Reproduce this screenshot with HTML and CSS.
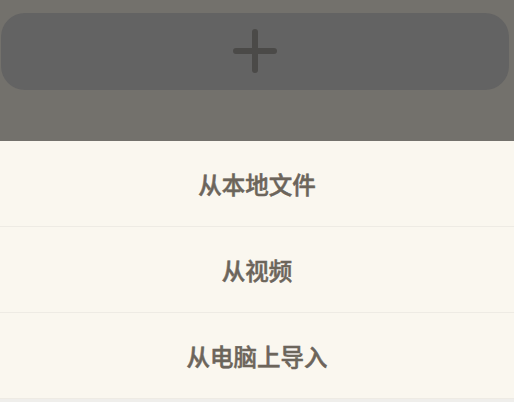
FILE: index.html
```html
<!DOCTYPE html>
<html lang="zh-CN">
<head>
<meta charset="utf-8">
<link rel="stylesheet" href="styles.css">
</head>
<body>
<div class="page">
  <div class="backdrop">
    <div class="add-card">
      <svg class="plus" width="44" height="44" viewBox="0 0 44 44" aria-hidden="true">
        <path d="M22 3 V41 M3 22 H41" stroke="#4b4a48" stroke-width="6" stroke-linecap="round" fill="none"/>
      </svg>
    </div>
  </div>
  <div class="sheet">
    <div class="option">从本地文件</div>
    <div class="option">从视频</div>
    <div class="option">从电脑上导入</div>
    <div class="sheet-foot"></div>
  </div>
</div>
</body>
</html>
```
FILE: styles.css
```css
html, body {
  margin: 0;
  padding: 0;
}
body {
  width: 514px;
  height: 402px;
  overflow: hidden;
  font-family: "Noto Sans CJK SC", "Noto Sans", sans-serif;
}
.page {
  display: flex;
  flex-direction: column;
  height: 402px;
}
.backdrop {
  background: #73716c;
  height: 141px;
  padding: 13px 5px 0 1px;
  box-sizing: border-box;
}
.add-card {
  height: 77px;
  background: #636363;
  border-radius: 24px;
  display: flex;
  align-items: center;
  justify-content: center;
}
.plus {
  display: block;
  margin-top: -1px;
}
.sheet {
  flex: 1;
  background: #faf7ef;
  display: flex;
  flex-direction: column;
}
.option {
  height: 85px;
  display: flex;
  align-items: center;
  justify-content: center;
  font-size: 23.5px;
  font-weight: 500;
  color: #6c655b;
  -webkit-text-stroke: 0.5px #6c655b;
  border-bottom: 1px solid #eeebe4;
}
.option:last-of-type {
  border-bottom: none;
  padding-top: 3px;
  box-sizing: border-box;
}
.sheet-foot {
  flex: 1;
  background: #efeeeb;
}
```
